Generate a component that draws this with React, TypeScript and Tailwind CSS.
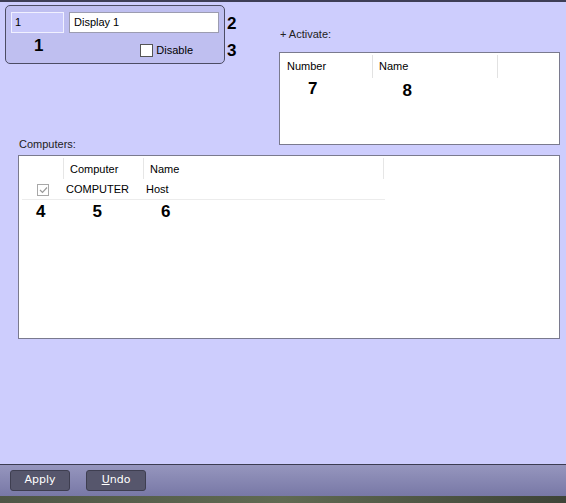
import React from 'react';

const font = { fontFamily: '"DejaVu Sans", "Liberation Sans", sans-serif' };

function Marker({ n, className = '' }: { n: string; className?: string }) {
  return <span className={`text-[17px] font-bold leading-none text-black ${className}`}>{n}</span>;
}

export default function App() {
  return (
    <div
      className="w-[566px] h-[503px] flex flex-col bg-[#cdcdfd] border-t-2 border-[#3e3e56] text-[11px] text-black overflow-hidden"
      style={{ fontFamily: '"Liberation Sans", Arial, sans-serif' }}
    >
      <div className="flex-1 flex flex-col">
        {/* top row */}
        <div className="flex items-start">
          <div className="ml-[5px] mt-[3px] w-[220px] h-[59px] rounded-[5px] border border-[#4c4c64] bg-[#bfbff0] relative">
            <div className="flex gap-[5px] pl-[5px] pt-[6px]">
              <div className="w-[53px] h-[21px] border border-[#f0f0ff] bg-[#cacafb] px-[3px] leading-[19px]">1</div>
              <div className="w-[150px] h-[21px] border border-[#9c9cb0] bg-white px-[4px] leading-[19px]">Display 1</div>
            </div>
            <div className="flex items-start">
              <Marker n="1" className="ml-[28px] mt-[4px]" />
              <div className="ml-auto mr-[31px] mt-[9px] flex items-center gap-[3px]">
                <span className="w-[13px] h-[13px] border border-[#555] bg-white" />
                <span>Disable</span>
              </div>
            </div>
          </div>
          <div className="flex flex-col ml-[2px] mt-[13px] gap-[10px]">
            <Marker n="2" />
            <Marker n="3" />
          </div>
          <div className="ml-auto mr-[6px] mt-[24px] flex flex-col">
            <div className="pl-[1px] h-[26px] text-[#222]">+ Activate:</div>
            <div className="w-[281px] h-[93px] border border-[#7a7a8e] bg-white">
              <div className="flex h-[25px] pt-[2px]">
                <div className="w-[93px] border-r border-[#e2e2e2] pl-[7px] pt-[3px]">Number</div>
                <div className="w-[125px] border-r border-[#e2e2e2] pl-[6px] pt-[3px]">Name</div>
              </div>
              <div className="flex">
                <Marker n="7" className="ml-[28px] mt-[2px]" />
                <Marker n="8" className="ml-[85px] mt-[4px]" />
              </div>
            </div>
          </div>
        </div>

        {/* computers */}
        <div className="ml-[18px] mt-[-9px] flex flex-col">
          <div className="pl-[1px] h-[19px] text-[#222]">Computers:</div>
          <div className="w-[542px] h-[184px] border border-[#7a7a8e] bg-white">
            <div className="w-[366px]">
              <div className="flex h-[23px] pt-[2px]">
                <div className="w-[45px] border-r border-[#e6e6e6]" />
                <div className="w-[80px] border-r border-[#e6e6e6] pl-[6px] pt-[3px]">Computer</div>
                <div className="w-[240px] border-r border-[#e6e6e6] pl-[6px] pt-[3px]">Name</div>
              </div>
              <div className="flex h-[21px] items-center border-b border-[#ececec] ml-[3px] pt-[1px]">
                <div className="w-[42px] flex justify-center">
                  <span className="w-[12px] h-[12px] border border-[#a8a8a8] flex items-center justify-center">
                    <svg width="9" height="8" viewBox="0 0 9 8">
                      <path d="M1 4 L3.5 6.5 L8 1.5" fill="none" stroke="#9a9a9a" strokeWidth="1.2" />
                    </svg>
                  </span>
                </div>
                <div className="w-[80px] pl-[2px]">COMPUTER</div>
                <div className="pl-[2px]">Host</div>
              </div>
            </div>
            <div className="flex mt-[3px]">
              <Marker n="4" className="ml-[17px]" />
              <Marker n="5" className="ml-[47px]" />
              <Marker n="6" className="ml-[59px]" />
            </div>
          </div>
        </div>
      </div>

      {/* bottom bar */}
      <div className="h-[32px] border-t border-[#3c3c52] bg-gradient-to-b from-[#9696be] to-[#7878a6] flex items-center gap-[16px] pl-[10px]">
        <button className="w-[60px] h-[21px] rounded-[3px] border border-[#3e3e50] bg-[#56566c] text-white text-[11px]" style={font}>
          Apply
        </button>
        <button className="w-[60px] h-[21px] rounded-[3px] border border-[#3e3e50] bg-[#56566c] text-white text-[11px]" style={font}>
          <span className="underline">U</span>ndo
        </button>
      </div>
      <div className="h-[7px] bg-gradient-to-r from-[#4e5646] via-[#606a52] to-[#3e4438]" />
    </div>
  );
}
